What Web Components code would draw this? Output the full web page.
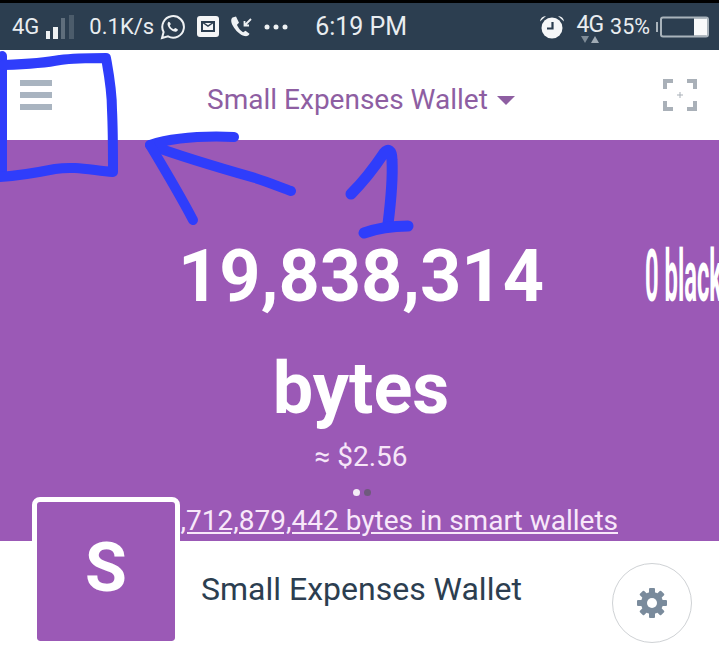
<!DOCTYPE html>
<html lang="en">
<head>
    <meta charset="UTF-8">
    <title>Small Expenses Wallet</title>
    <style>
        html, body { margin: 0; background: #fff; }
        body { position: relative; width: 719px; height: 661px; overflow: hidden; font-family: Roboto, "Liberation Sans", sans-serif; }
    </style>
</head>
<body>
    <status-bar></status-bar>
    <wallet-header>Small Expenses Wallet</wallet-header>
    <balance-hero link="1,712,879,442 bytes in smart wallets" fiat="≈ $2.56">19,838,314 bytes</balance-hero>
    <wallet-row letter="S">Small Expenses Wallet</wallet-row>
    <ink-notes></ink-notes>

    <script>
        class StatusBar extends HTMLElement {
            constructor(...args) {
                super(...args)
                this.attachShadow({ mode: 'open' })
                this.shadowRoot.innerHTML = /* HTML */`
                    <style>
                        :host {
                            display: flex;
                            align-items: center;
                            box-sizing: border-box;
                            height: 50px;
                            border-top: 3px solid #000;
                            padding: 0 10px 0 12px;
                            background: #2c3e50;
                            color: #e9edf0;
                            font-size: 22px;
                        }
                        svg { display: block; flex: none; }
                        .time { font-size: 25px; margin-left: 27px; }
                        .net { position: relative; font-size: 23px; margin-left: 11px; top: -2px; letter-spacing: -1px; }
                        .pct { margin-left: 7px; font-size: 21.500px; }
                    </style>
                    <span>4G</span>
                    <svg style="margin-left:7px" width="30" height="26" viewBox="0 0 30 26">
                        <rect x="0" y="17" width="4" height="8" fill="#eef1f3"/>
                        <rect x="7" y="13" width="5" height="12" fill="#eef1f3"/>
                        <rect x="15" y="4" width="4" height="21" fill="#5f6e7c"/>
                        <rect x="23" y="1" width="5" height="24" fill="#4c5c6b"/>
                    </svg>
                    <span style="margin-left:13px">0.1K/s</span>
                    <svg style="margin-left:6px" width="25" height="26" viewBox="0 0 25 26">
                        <path d="M2 24l1.600-6A10.800 10.800 0 1 1 8 22.400z" fill="none" stroke="#eef1f3" stroke-width="2"/>
                        <path d="M8.800 7.500c-1.500 1-1.600 3-.6 5 1.200 2.300 3.300 4.200 5.800 5 1.800.5 3.400-.2 3.900-1.600.2-.6-2.300-2-2.800-1.900-.6.200-.8 1.200-1.400 1.200-1.200-.2-3.500-2.300-3.800-3.500-.1-.6.800-1 .9-1.600 0-.5-1-2.600-2-2.100z" fill="#eef1f3"/>
                    </svg>
                    <svg style="margin-left:12px" width="22" height="22" viewBox="0 0 22 22">
                        <rect width="22" height="21" rx="3" fill="#f4f5f6"/>
                        <rect x="5" y="6" width="12" height="9" fill="none" stroke="#2c3e50" stroke-width="2"/>
                        <path d="M5 6l6 4 6-4" fill="none" stroke="#2c3e50" stroke-width="1.500"/>
                    </svg>
                    <svg style="margin-left:11px" width="23" height="24" viewBox="0 0 23 24">
                        <path d="M2.500 2.500c-2 1.500-1.500 5 .5 8.500 2.500 4.500 7 9 11.500 10 2.500.5 4.500-.5 5-2.300l-4-3-2.300 1.500c-2-.8-5.500-5-6.200-7.500L9 7.700 6 1.500z" fill="#eef1f3"/>
                        <path d="M21 4l-6 6M14.500 6v4.500H19" fill="none" stroke="#eef1f3" stroke-width="1.800"/>
                    </svg>
                    <svg style="margin-left:11px" width="24" height="6" viewBox="0 0 24 6" fill="#eef1f3">
                        <circle cx="3" cy="3" r="2.500"/><circle cx="12" cy="3" r="2.500"/><circle cx="21" cy="3" r="2.500"/>
                    </svg>
                    <span class="time">6:19 PM</span>
                    <svg style="margin-left:auto" width="26" height="26" viewBox="0 0 26 26">
                        <path d="M1 7.500A6 6 0 0 1 7 2zM25 7.500A6 6 0 0 0 19 2z" fill="#eef1f3"/>
                        <circle cx="13" cy="14" r="10.500" fill="#f6f7f8"/>
                        <path d="M13.500 8v6.500H8" fill="none" stroke="#2c3e50" stroke-width="2.200"/>
                    </svg>
                    <span class="net">4G<svg style="position:absolute;left:4px;top:25px" width="20" height="8" viewBox="0 0 20 8"><path d="M1 0h8L5 7z" fill="#7e8b97"/><path d="M11 7h8l-4-7z" fill="#a0abb5"/></svg></span>
                    <span class="pct">35%</span>
                    <svg style="margin-left:6px" width="53" height="22" viewBox="0 0 53 22">
                        <rect x="0" y="6" width="2" height="10" fill="#a9b3bb"/>
                        <rect x="5" y="1.500" width="47" height="19" rx="2" fill="none" stroke="#a9b3bb" stroke-width="2"/>
                        <rect x="38" y="2.500" width="13" height="17" fill="#f8f9fa"/>
                    </svg>
                `
            }
        }
        self.customElements.define('status-bar', StatusBar)
    </script>
    <script>
        class WalletHeader extends HTMLElement {
            constructor(...args) {
                super(...args)
                this.attachShadow({ mode: 'open' })
                this.shadowRoot.innerHTML = /* HTML */`
                    <style>
                        :host {
                            display: flex;
                            align-items: center;
                            box-sizing: border-box;
                            height: 90px;
                            padding: 0 22px 0 20px;
                            background: #fff;
                        }
                        .menu { display: flex; flex-direction: column; gap: 5.500px; width: 32px; }
                        .menu i { display: block; height: 6.500px; background: #a9b4c0; }
                        .title {
                            flex: 1;
                            display: flex;
                            align-items: center;
                            justify-content: center;
                            gap: 9px;
                            padding: 8px 0 0 7px;
                            color: #8e5ea2;
                            font-size: 28px;
                        }
                        .caret { width: 0; height: 0; border: 9px solid transparent; border-top: 9px solid #8e5ea2; border-bottom: 0; margin-top: 3px; }
                    </style>
                    <div class="menu"><i></i><i></i><i></i></div>
                    <div class="title"><slot></slot><span class="caret"></span></div>
                    <svg width="34" height="34" viewBox="0 0 34 34" fill="none" stroke="#a9b0b8" stroke-width="4">
                        <path d="M2 11V3h8M24 3h8v8M32 23v8h-8M10 31H2v-8"/>
                        <path d="M17 14v6M14 17h6" stroke-width="1"/>
                    </svg>
                `
            }
        }
        self.customElements.define('wallet-header', WalletHeader)
    </script>
    <script>
        class BalanceHero extends HTMLElement {
            constructor(...args) {
                super(...args)
                this.attachShadow({ mode: 'open' })
                this.shadowRoot.innerHTML = /* HTML */`
                    <style>
                        :host {
                            display: block;
                            box-sizing: border-box;
                            height: 401px;
                            padding-top: 81px;
                            overflow: hidden;
                            background: #9b59b6;
                            color: #fff;
                            text-align: center;
                        }
                        .track { display: flex; height: 268px; }
                        .slide { flex: none; width: 440px; margin-left: 141px; }
                        .amount { font-size: 72px; font-weight: 700; line-height: 112px; }
                        .fiat { font-size: 28px; line-height: 34px; margin-top: -5px; color: #f6e6f8; }
                        .other {
                            flex: none;
                            margin-left: 64px;
                            font-size: 72px;
                            font-weight: 700;
                            line-height: 112px;
                            white-space: nowrap;
                            transform: scaleX(.33);
                            transform-origin: 0 0;
                        }
                        .dots { display: flex; justify-content: center; gap: 4px; padding-left: 4px; height: 7px; }
                        .dots i { width: 7px; height: 7px; border-radius: 50%; background: #f4ecf6; }
                        .dots i + i { background: #6f5a7d; }
                        a { display: block; margin-top: 7px; padding-right: 101px; font-size: 28px; line-height: 36px; color: #f8e8fa; text-align: right; text-decoration: underline; text-underline-offset: 2px; white-space: nowrap; }
                    </style>
                    <div class="track">
                        <div class="slide">
                            <div class="amount"><slot></slot></div>
                            <div class="fiat">${this.getAttribute('fiat')}</div>
                        </div>
                        <div class="other">0 blackbytes</div>
                    </div>
                    <div class="dots"><i></i><i></i></div>
                    <a href="#">${this.getAttribute('link')}</a>
                `
            }
        }
        self.customElements.define('balance-hero', BalanceHero)
    </script>
    <script>
        class WalletRow extends HTMLElement {
            constructor(...args) {
                super(...args)
                this.attachShadow({ mode: 'open' })
                this.shadowRoot.innerHTML = /* HTML */`
                    <style>
                        :host {
                            display: flex;
                            position: relative;
                            align-items: flex-start;
                            margin-top: -44px;
                            padding: 0 27px 0 32px;
                            color: #2c3e50;
                        }
                        .avatar {
                            box-sizing: border-box;
                            display: flex;
                            align-items: center;
                            justify-content: center;
                            flex: none;
                            width: 148px;
                            height: 149px;
                            border: 5px solid #fff;
                            border-radius: 8px;
                            background: #9b59b6;
                            background-clip: padding-box;
                            color: #fff;
                            font-size: 68px;
                            font-weight: 700;
                            padding-bottom: 8px;
                        }
                        .name { margin: 72px 0 0 21px; font-size: 32px; line-height: 40px; flex: 1; }
                        .gear {
                            box-sizing: border-box;
                            display: flex;
                            align-items: center;
                            justify-content: center;
                            width: 80px;
                            height: 80px;
                            margin-top: 66px;
                            border: 1.500px solid #cfd2d5;
                            border-radius: 50%;
                        }
                    </style>
                    <div class="avatar">${this.getAttribute('letter')}</div>
                    <div class="name"><slot></slot></div>
                    <div class="gear">
                        <svg width="30" height="30" viewBox="0 0 30 30">
                            <g fill="#7a8b9c">
                                <rect x="12" y="0" width="6" height="30" rx="1"/>
                                <rect x="12" y="0" width="6" height="30" rx="1" transform="rotate(45 15 15)"/>
                                <rect x="12" y="0" width="6" height="30" rx="1" transform="rotate(90 15 15)"/>
                                <rect x="12" y="0" width="6" height="30" rx="1" transform="rotate(135 15 15)"/>
                                <circle cx="15" cy="15" r="11"/>
                            </g>
                            <circle cx="15" cy="15" r="5" fill="#fff"/>
                        </svg>
                    </div>
                `
            }
        }
        self.customElements.define('wallet-row', WalletRow)
    </script>
    <script>
        // hand drawn marks on top of the screenshot
        class InkNotes extends HTMLElement {
            constructor(...args) {
                super(...args)
                this.attachShadow({ mode: 'open' })
                this.shadowRoot.innerHTML = /* HTML */`
                    <style>
                        :host { position: absolute; left: 0; top: 0; pointer-events: none; }
                        svg { display: block; }
                        path { fill: none; stroke: #2f3dfb; stroke-width: 10; stroke-linecap: round; stroke-linejoin: round; }
                    </style>
                    <svg width="719" height="661" viewBox="0 0 719 661">
                        <path d="M2 56V176"/>
                        <path d="M4 65C30 64 50 62 60 60C75 58 90 58 106 58C109 75 112 90 112 110C113 130 113 150 113 172C90 170 75 166 55 169C35 173 15 176 0 177"/>
                        <path d="M234 137C210 136 175 137 150 145C185 158 220 168 255 178C268 182 280 187 291 191"/>
                        <path d="M150 145C165 170 180 195 193 220"/>
                        <path style="stroke-width:11" d="M351 194C362 183 374 168 384 153C388 148 392 150 392 160C393 180 391 200 388 224"/>
                        <path style="stroke-width:11" d="M364 233C378 228 392 226 408 226"/>
                    </svg>
                `
            }
        }
        self.customElements.define('ink-notes', InkNotes)
    </script>
</body>
</html>
